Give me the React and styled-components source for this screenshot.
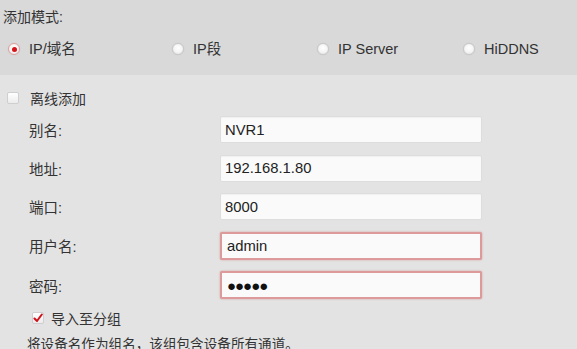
import React from "react";
import styled, { createGlobalStyle } from "styled-components";

const Global = createGlobalStyle`
  html, body { margin: 0; padding: 0; background: #e3e3e3; }
  body {
    font-family: "Liberation Sans", "Noto Sans CJK SC", sans-serif;
    font-size: 14px;
    color: #333;
    width: 577px;
    height: 349px;
    overflow: hidden;
  }
`;

const Page = styled.div`
  width: 577px;
  height: 349px;
  overflow: hidden;
  background: #e3e3e3;
`;

const ModeSection = styled.div`
  height: 75px;
  box-sizing: border-box;
  background: #d9d9d9;
  padding: 8px 0 0 3px;
`;

const Title = styled.div`
  line-height: 18px;
`;

const RadioRow = styled.div`
  display: grid;
  grid-template-columns: 164px 145px 146px 120px;
  margin: 13px 0 0 5px;
  height: 20px;
  align-items: center;
  font-size: 14.5px;
`;

const RadioItem = styled.label`
  display: flex;
  align-items: center;
  gap: 9px;
  line-height: 20px;
`;

const RadioDot = styled.span`
  position: relative;
  width: 12px;
  height: 12px;
  border-radius: 50%;
  box-sizing: border-box;
  border: 1px solid ${(p) => (p.$checked ? "#e3a0a0" : "#c9c9c9")};
  background: radial-gradient(circle at 50% 40%, #ffffff 0%, #f4f4f4 55%, #dedede 100%);
  box-shadow: 0 0 1px rgba(0, 0, 0, 0.15);
  &::after {
    content: "";
    display: ${(p) => (p.$checked ? "block" : "none")};
    position: absolute;
    left: 50%;
    top: 50%;
    width: 5px;
    height: 5px;
    margin: -2.5px 0 0 -2.5px;
    border-radius: 50%;
    background: #d7141a;
  }
`;

const FormSection = styled.div`
  padding-top: 13px;
`;

const CheckRow = styled.label`
  display: flex;
  align-items: center;
  gap: ${(p) => p.$gap || 10}px;
  height: ${(p) => p.$h || 20}px;
  padding-left: ${(p) => p.$left}px;
  margin-top: ${(p) => p.$top || 0}px;
`;

const Box = styled.span`
  width: 12px;
  height: 12px;
  box-sizing: border-box;
  border: 1px solid #cfcfcf;
  border-radius: 2px;
  background: linear-gradient(#ffffff, #ececec);
  display: flex;
  align-items: center;
  justify-content: center;
`;

const Fields = styled.div`
  display: flex;
  flex-direction: column;
  gap: 11.5px;
  margin-top: 8px;
`;

const FieldRow = styled.div`
  display: flex;
  align-items: center;
  padding-left: 29px;
  height: ${(p) => (p.$tall ? 28 : 27)}px;
`;

const Label = styled.span`
  width: 191px;
  font-size: 14.5px;
`;

const Input = styled.div`
  width: 262px;
  height: ${(p) => (p.$tall ? 28 : 27)}px;
  box-sizing: border-box;
  padding-left: ${(p) => (p.$invalid ? 5 : 4)}px;
  display: flex;
  align-items: center;
  background: #fafafa;
  border: ${(p) => (p.$invalid ? "2px solid #dc9a9a" : "1px solid #dddddd")};
  border-radius: 2px;
  box-shadow: ${(p) =>
    p.$invalid ? "0 0 2px rgba(200, 60, 60, 0.45)" : "inset 0 1px 1px rgba(0,0,0,0.04)"};
  font-size: 14.8px;
  color: #222;
`;

const Dots = styled.span`
  font-size: 15px;
  letter-spacing: -1px;
  color: #111;
`;

const Note = styled.div`
  padding-left: 27px;
  margin-top: 9.5px;
  line-height: 18px;
  font-size: 13.6px;
`;

const modes = ["IP/域名", "IP段", "IP Server", "HiDDNS"];

export default function App() {
  return (
    <Page>
      <Global />
      <ModeSection>
        <Title>添加模式:</Title>
        <RadioRow>
          {modes.map((m, i) => (
            <RadioItem key={m}>
              <RadioDot $checked={i === 0} />
              {m}
            </RadioItem>
          ))}
        </RadioRow>
      </ModeSection>
      <FormSection>
        <CheckRow $left={7} $gap={11}>
          <Box />
          离线添加
        </CheckRow>
        <Fields>
          <FieldRow>
            <Label>别名:</Label>
            <Input>NVR1</Input>
          </FieldRow>
          <FieldRow>
            <Label>地址:</Label>
            <Input>192.168.1.80</Input>
          </FieldRow>
          <FieldRow>
            <Label>端口:</Label>
            <Input>8000</Input>
          </FieldRow>
          <FieldRow $tall>
            <Label>用户名:</Label>
            <Input $invalid $tall>admin</Input>
          </FieldRow>
          <FieldRow $tall>
            <Label>密码:</Label>
            <Input $invalid $tall>
              <Dots>●●●●●</Dots>
            </Input>
          </FieldRow>
        </Fields>
        <CheckRow $left={32} $gap={7} $h={16} $top={11}>
          <Box>
            <svg width="10" height="10" viewBox="0 0 10 10">
              <path d="M1.5 5.5 L4 8 L8.8 1.5" fill="none" stroke="#d0101a" strokeWidth="2" strokeLinecap="round" strokeLinejoin="round" />
            </svg>
          </Box>
          导入至分组
        </CheckRow>
        <Note>将设备名作为组名，该组包含设备所有通道。</Note>
      </FormSection>
    </Page>
  );
}
